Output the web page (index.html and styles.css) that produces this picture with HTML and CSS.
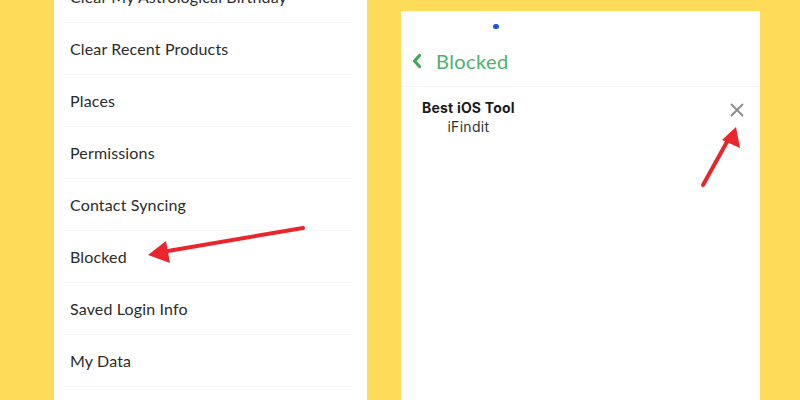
FILE: index.html
```html
<!DOCTYPE html>
<html>
<head>
<meta charset="utf-8">
<link rel="stylesheet" href="styles.css">
</head>
<body>
<div class="stage">
  <div class="left-panel">
    <ul class="menu">
      <li class="row">Clear My Astrological Birthday</li>
      <li class="row">Clear Recent Products</li>
      <li class="row">Places</li>
      <li class="row">Permissions</li>
      <li class="row">Contact Syncing</li>
      <li class="row">Blocked</li>
      <li class="row">Saved Login Info</li>
      <li class="row">My Data</li>
    </ul>
  </div>
  <div class="right-panel">
    <div class="dot-bar"><span class="dot"></span></div>
    <div class="header">
      <svg class="chev" width="10" height="16" viewBox="0 0 10 16"><path d="M7.5 2.5 L2.5 8 L7.5 13.5" fill="none" stroke="#3aa954" stroke-width="3.2" stroke-linecap="round" stroke-linejoin="round"/></svg>
      <span class="title">Blocked</span>
    </div>
    <div class="entry">
      <div class="entry-text">
        <div class="entry-name">Best iOS Tool</div>
        <div class="entry-user">iFindit</div>
      </div>
      <svg class="close" width="14" height="14" viewBox="0 0 14 14"><path d="M1.5 1.5 L12.5 12.5 M12.5 1.5 L1.5 12.5" stroke="#8a8a8a" stroke-width="1.8" stroke-linecap="round"/></svg>
    </div>
  </div>
  <svg class="arrows" width="800" height="400" viewBox="0 0 800 400">
    <line x1="303" y1="228" x2="162" y2="252" stroke="#e8262b" stroke-width="4" stroke-linecap="round"/>
    <polygon points="148,255 166,241 170,263" fill="#e8262b"/>
    <line x1="703" y1="185" x2="728" y2="140" stroke="#e8262b" stroke-width="4" stroke-linecap="round"/>
    <polygon points="736,127 722,140 740,148" fill="#e8262b"/>
  </svg>
</div>
</body>
</html>
```
FILE: styles.css
```css
html, body {
  margin: 0;
  padding: 0;
}
body {
  width: 800px;
  height: 400px;
  overflow: hidden;
  background: #ffdb5a;
  font-family: "Lato", "Noto Sans", sans-serif;
}
.stage {
  position: relative;
  width: 800px;
  height: 400px;
  display: flex;
  align-items: flex-start;
}
.left-panel {
  margin-left: 54px;
  width: 313px;
  height: 400px;
  background: #fff;
  overflow: hidden;
}
.menu {
  list-style: none;
  margin: -29px 0 0 0;
  padding: 0 15px 0 9px;
}
.row {
  height: 51px;
  border-bottom: 1px solid #f7f7f7;
  display: flex;
  align-items: center;
  padding-left: 7px;
  font-size: 16px;
  color: #2b2b2b;
  letter-spacing: 0.15px;
}
.right-panel {
  margin-left: 34px;
  margin-top: 11px;
  width: 359px;
  height: 389px;
  background: #fff;
}
.dot-bar {
  height: 25px;
  box-sizing: border-box;
  padding: 13px 0 0 92px;
  display: flex;
  align-items: flex-start;
}
.dot {
  width: 6px;
  height: 5px;
  border-radius: 3px;
  background: #1f57d6;
}
.header {
  height: 50px;
  border-bottom: 1px solid #f5f5f5;
  display: flex;
  align-items: center;
  padding-left: 11px;
  gap: 14px;
}
.title {
  font-family: "Lato", sans-serif;
  font-size: 20px;
  color: #4cb267;
  letter-spacing: 0.4px;
}
.entry {
  display: flex;
  justify-content: space-between;
  padding: 12px 16px 0 21px;
}
.entry-text {
  display: flex;
  flex-direction: column;
  align-items: center;
}
.entry-name {
  font-family: "Inter", sans-serif;
  font-weight: 700;
  font-size: 14px;
  color: #1a1a1a;
  line-height: 18px;
  letter-spacing: 0.2px;
}
.entry-user {
  font-family: "Inter", sans-serif;
  font-size: 14px;
  color: #333;
  line-height: 20px;
  letter-spacing: 0.3px;
}
.close {
  margin-top: 4px;
}
.arrows {
  position: absolute;
  left: 0;
  top: 0;
  pointer-events: none;
}
```
